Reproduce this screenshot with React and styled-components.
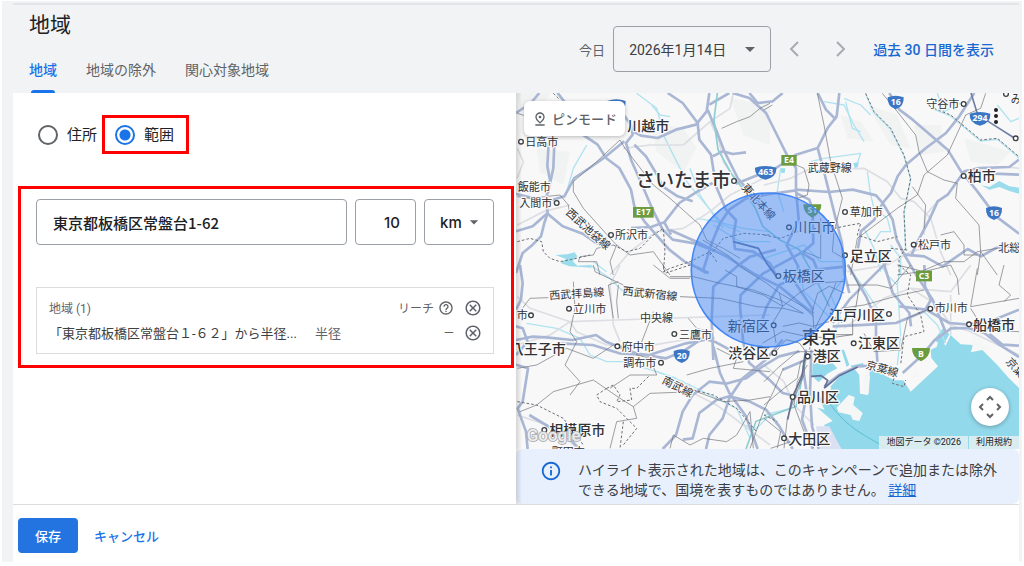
import { useState } from "react";
import styled, { createGlobalStyle } from "styled-components";
import {
  MdArrowDropDown,
  MdHelpOutline,
  MdInfoOutline,
  MdOutlineCancel,
  MdOutlinePinDrop,
} from "react-icons/md";

// main roads, in the coordinates of the whole map
const ROADS = [
  "M0 60L45 30 70 0",
  "M125 0L160 45 200 125 245 155 270 195 310 225 345 290 355 340 385 385 420 425 460 470 505 505 540 522 572 540",
  "M325 145L270 190 225 222 175 255 145 310 95 325 0 303",
  "M98 150L94 220 102 260 90 320 95 360 50 400 0 415",
  "M115 150L112 225 96 300",
  "M95 362L140 400 200 422 240 450 280 462",
  "M0 540L20 480 50 455 75 430 85 390 95 360",
  "M295 30L345 95 350 125 330 150 345 200 380 280 410 350 440 410 470 440 540 452 600 475",
  "M350 115L375 128 425 135 480 110 540 95 572 55 580 0",
  "M355 155L390 190 420 240 440 280 485 310 530 325",
  "M455 0L500 30 545 90 550 140 585 185 600 280 630 350 660 381 652 431 657 468 712 476 762 511 782 551",
  "M575 50L600 110 625 175 665 255 720 320 760 370",
  "M580 35L640 0",
  "M590 190L620 175 650 183 690 178",
  "M345 405L405 402 445 388 490 330 545 295 590 270",
  "M445 388L465 425",
  "M660 272L720 248 780 225 840 185 905 165",
  "M650 0L700 15 750 60 780 120 815 190 840 225 840 290 848 380 812 456 847 521 832 561 892 651",
  "M700 0L725 30 770 25 800 0",
  "M0 0",
  "M840 292L762 303 690 316 640 350 612 391 587 451 562 531",
  "M545 524L578 540",
  "M840 290L940 297 1010 290 1080 307 1100 330 1130 380 1142 440 1165 485 1200 545 1250 620 1290 720",
  "M970 0L962 70 935 105 905 165 925 240 950 340 965 400 978 450 985 540 1000 600",
  "M905 0L930 50 960 80",
  "M840 300L880 320 890 350 892 451 862 476 742 541 674 606 672 641 682 751",
  "M592 801L587 681 592 581 662 521 702 491 780 470",
  "M462 411L552 451 632 491 712 541 792 581 852 631 892 661",
  "M732 701L752 641 790 575 900 530 985 521",
  "M852 476L892 501 902 526",
  "M1375 0L1330 70 1290 120 1230 165 1170 215 1145 250 1125 300 1100 330 1075 380 1035 415 1025 470",
  "M1120 0L1150 50 1190 80 1260 140 1295 170 1335 235 1380 290 1440 370 1509 422",
  "M1509 200L1480 222 1390 225 1345 235 1295 305 1265 325 1240 380 1200 455 1185 490",
  "M1509 245L1435 242 1365 232",
  "M1165 485L1225 490 1280 520 1355 468 1395 490 1440 465 1509 455",
  "M995 515L1050 610 1080 680 1080 740 1085 820",
  "M1120 500L1060 560 1000 620 950 690",
  "M1100 500L1130 600 1180 660 1185 700",
  "M950 700L1060 695 1140 690 1225 655 1245 620 1227 580 1225 516",
  "M1160 840L1220 785 1255 742 1305 706 1355 705 1405 720 1450 755 1509 792",
  "M1509 650L1430 682 1360 695 1300 690 1230 650 1150 640",
  "M1420 722L1460 755 1509 758",
  "M925 880L970 845 1025 820 1080 818",
  "M870 770L862 830 872 900 858 980 890 1068",
  "M886 770L882 900 888 1000 908 1068",
  "M0 741L50 731 90 733 170 741 240 726 270 746 360 781 450 796 500 776 560 736 600 748 660 780",
  "M130 751L230 756 310 781 400 786 510 751 595 735",
  "M0 786L35 746 20 706 0 700",
  "M12 516L20 570 15 620 0 650",
  "M0 815L36 826 20 926 5 946 30 1016 35 1068",
  "M40 966L90 996 160 1036 190 1068",
  "M592 760L612 840 640 900 690 970 725 1068",
  "M440 1068L480 1026 500 956 530 906 580 866 630 872 690 856 740 820 790 790 850 775",
  "M570 1068L580 1026 620 976 640 916 680 856 750 800 800 740",
  "M640 910L700 925 750 950 790 1000 830 1068",
  "M500 1040L530 1036 550 960 600 922 640 910",
  "M682 751L700 810 760 860 800 900 860 915",
  "M800 830L870 800",
];

const CITY_RAILS = [
  "M462 551L532 551 612 571 712 591 792 621 862 661",
  "M492 611L612 616 722 641 802 646 862 661",
  "M627 531L662 551 662 581 742 606 800 640",
  "M560 441L642 491 672 521 752 571 792 601 862 641 892 671",
  "M985 600L940 580 905 600 890 650 895 730",
  "M960 570L930 640 900 700 880 770",
  "M800 640L850 600 900 570 985 565",
  "M780 750L770 690 800 640 790 600",
  "M800 700L850 690 890 700 960 680",
  "M740 750L800 715 870 730 940 735 1010 725",
  "M780 775L810 740 850 750 880 790",
  "M1010 660L1010 725 950 725",
  "M1000 520L1030 580 1020 640 975 690",
];

// sparser layers, in four sheets that each have their own origin
const SHEETS = [
  {
    id: "nw",
    x: -18,
    y: -24,
    fields: [
      "M420 110L520 130 560 190 520 260 440 200Z",
      "M22 25L120 25 90 90 30 70Z",
      "M660 40L780 60 780 180 700 150Z",
      "M80 190L180 200 160 300 90 260Z",
    ],
    minor: [
      "M22 190L40 230 22 280",
      "M340 190L420 180 520 180 600 110 660 70 670 25",
      "M300 570L360 500 440 440 520 430 600 380 660 330 740 290 780 270",
      "M600 110L625 160 640 230 680 290 740 340 780 400",
      "M22 420L100 380 180 360",
    ],
    water: [
      "M140 25L170 60 190 70",
      "M230 180L190 250 170 320",
      "M380 25L440 70 465 160 500 230 530 290 580 350 640 420 690 440",
      "M425 60L450 90 480 95",
      "M540 250L570 330 610 390 640 430",
      "M560 400L620 410 700 430 780 440",
      "M250 530L290 560",
      "M610 420L690 470 780 470",
    ],
    rails: [
      "M22 85L45 92",
      "M330 165L345 190 430 300 480 340 570 420 590 465",
      "M330 165L260 230 190 290 190 320 220 370 310 470 320 480",
      "M320 480L360 510 430 500 480 570",
      "M320 480L300 530 310 570",
      "M310 480L260 490 250 510 210 515 205 530 260 530 270 570",
      "M635 130L680 110 720 95 750 70 780 55",
      "M22 335L60 340 150 330 175 360 180 400",
      "M590 465L640 490 690 520",
    ],
    borders: [
      "M22 470L60 460 95 470 100 500 120 520 150 530 200 520 240 510",
      "M310 480L350 500 390 490 430 450 460 430 465 500 460 560 480 550 540 530 600 500 620 530",
      "M600 510L640 460 700 445 780 450",
      "M130 25L150 45",
    ],
  },
  {
    id: "ne",
    x: 744,
    y: -24,
    fields: [
      "M310 60L400 90 440 190 380 180Z",
      "M450 120L530 120 540 200 470 210Z",
      "M230 90L290 110 330 170 250 160Z",
      "M600 160L740 200 700 240 620 230Z",
    ],
    minor: [
      "M0 300L80 280 130 255 300 250 370 290 410 340 450 350 500 400 530 500 560 570",
      "M250 560L370 540 440 500 520 480",
      "M640 260L720 245 765 250",
      "M480 450L485 390 520 350",
    ],
    water: [
      "M180 50L240 60 270 120 300 170",
      "M245 50L265 130 290 140",
      "M320 90L290 60 240 40",
      "M310 260L320 330 330 370 370 400 380 440 350 440 330 470",
      "M140 230L180 220 290 205 280 235",
      "M520 25L540 80 600 50",
      "M700 60L740 110 765 100",
      "M300 430L330 490 350 560",
      "M50 250L40 320 60 380",
      "M380 480L410 520 410 570",
      "M305 28L330 83 380 133 420 213 440 283 420 383 425 493",
      "M510 73L560 93 620 143 650 168 700 163 765 218",
      "M0 520L60 500 120 480 170 530 240 530",
    ],
    rails: [
      "M25 60L0 75",
      "M160 25L180 120 200 230 235 340 210 440 205 500 240 520",
      "M85 235L120 250 135 300 130 330 100 340",
      "M355 25L400 80 455 150 465 200 490 260 540 285 580 295 575 340 645 420 650 500 700 570",
      "M665 25L650 70 605 90 550 210 480 270 460 330 400 370 280 460 260 570",
      "M445 305L485 360 480 430",
      "M530 450L570 440 600 480 600 510 640 510",
      "M700 490L640 500 600 530 540 530 470 560 400 570",
      "M650 500L640 570",
      "M170 400L170 520 120 500",
    ],
    borders: [
      "M305 25L330 80 380 130 420 210 440 280 420 380 425 490 405 520 405 570",
      "M510 70L560 90 620 140 650 165 700 160 765 215",
      "M210 430L260 420 290 415 280 450 340 470 400 455",
      "M380 490L430 495",
      "M0 450L50 460 100 440 160 430",
    ],
  },
  {
    id: "sw",
    x: -18,
    y: 516,
    fields: [],
    minor: [
      "M22 95L60 130 180 170 320 165 620 155 780 150",
      "M330 0L300 60 310 180 330 230",
      "M22 240L120 210 180 170 200 200 290 240 400 245 610 210",
      "M22 450L140 490 200 550",
      "M520 370L620 420 700 480 780 540",
    ],
    water: [
      "M50 175L140 190 210 220 240 270 290 290 340 290 440 320 500 340",
      "M440 320L520 350 560 380",
      "M240 0L300 40 340 80",
      "M700 480L740 490 780 450",
      "M530 355L600 390 680 430 720 520",
    ],
    rails: [
      "M22 150L60 100 115 98",
      "M190 50L195 130 180 200 200 230 165 300 210 350 180 390",
      "M250 0L255 20 340 60 345 90",
      "M325 50L295 60 310 160",
      "M325 60L320 110 325 160",
      "M22 310L80 300 170 250 250 280 310 240",
      "M30 440L80 420 130 380 250 345 330 400 370 425 420 385 500 382",
      "M430 140L380 270 420 280 440 330 360 330 300 370",
      "M535 160L560 190 600 200",
      "M370 425L380 460 320 470 300 550",
      "M480 550L490 510 540 540 580 520 650 530 680 510 720 440 730 550",
      "M530 330L600 310 700 290",
      "M620 250L680 280 670 310 780 320",
      "M430 0L480 40 540 40",
      "M560 380L640 410 720 405 780 395",
      "M720 550L760 440 790 380 820 310",
    ],
    borders: [
      "M22 410L80 420 160 460 220 540",
      "M290 370L260 390 270 410 320 430 380 490 340 540",
      "M290 370L310 360 330 390 320 410 365 405 360 370 380 370 400 350 420 330",
      "M340 470L330 550",
      "M460 0L465 25 540 0",
      "M550 375L610 390 680 430 740 500",
    ],
  },
  {
    id: "se",
    x: 744,
    y: 516,
    fields: [],
    minor: [
      "M240 190L360 100 440 70 520 120 560 180 620 200 765 270",
      "M0 300L60 350 90 420 150 480",
      "M440 70L560 80 620 0",
      "M560 90L560 210",
    ],
    water: [
      "M250 0L300 70 340 130 350 180",
      "M410 0L400 60 410 210 400 300",
      "M350 0L370 30 400 60",
      "M470 130L520 180 545 235",
      "M240 40L200 90 230 160 200 230",
      "M0 450L80 430 120 330",
      "M100 0L120 80 200 160",
    ],
    rails: [
      "M400 0L480 20 560 0 580 40 585 90",
      "M720 0L705 60 740 90 720 110",
      "M765 100L620 125 640 10",
      "M620 130L660 195 765 200",
      "M0 350L40 310 100 260 150 260",
      "M0 420L60 370 100 340 110 290 140 280",
      "M150 550L120 500 90 420 100 350 130 300",
      "M300 205L330 260 410 255 430 160 500 130",
      "M250 60L340 60 380 70 440 0",
      "M230 130L300 120 410 90 480 75",
      "M40 550L50 500 0 460",
      "M60 550L70 460 90 400 120 330 125 260",
      "M20 550L80 530",
    ],
    borders: [
      "M405 0L440 30 430 90 470 150 480 200 420 215 410 300",
      "M390 340L385 355 420 365 425 345",
      "M0 450L40 470",
    ],
  },
];

const BAY =
  "M1509 885L1479 856 1444 816 1399 771 1364 778 1372 756 1334 754 1304 726 1289 758 1270 734 1262 762 1244 770 1246 795 1266 820 1184 896 1162 862 1134 862 1062 824 1056 906 1032 902 1030 846 1014 826 979 841 939 886 914 892 948 920 906 912 926 950 904 944 950 984 924 996 976 1068 1509 1068Z";
const DOCKS =
  "M890 808L930 816 946 806 964 826 934 842 908 868 888 850ZM976 770L984 770 1000 815 992 822ZM1004 818L1040 810 1044 816 1008 824ZM1254 740L1282 704 1300 724 1280 760Z";
const ISLANDS = [
  "M998 906L1016 912 1012 936 1040 960 1030 984 1010 980 1004 966 968 958 962 944Z",
  "M1052 838L1040 862 1044 900 1058 902 1062 850Z",
  "M924 872L946 884 936 904 918 892Z",
  "M1366 718L1400 722 1396 756 1422 760 1420 770 1370 768Z",
  "M1186 840L1206 834 1210 850 1192 856Z",
];
const LAKES =
  "M118 486L154 484 176 478 184 490 170 504 184 518 226 516 228 524 196 522 160 520 134 510 150 498ZM1395 276L1420 282 1450 264 1480 280 1509 284 1509 302 1480 294 1450 282 1420 290ZM1012 210L1028 208 1026 222 1016 226ZM794 226L808 226 806 240 796 240Z";

const LABELS = [
  ["川越市", 334, 115, 42, 500],
  ["日高市", 28, 158, 33],
  ["飯能市", 5, 293, 33],
  ["入間市", 10, 343, 33],
  ["所沢市", 297, 437, 33],
  ["さいたま市", 360, 283, 57, 500],
  ["武蔵野線", 875, 238, 33],
  ["守谷市", 1231, 46, 33],
  ["み", 1484, 29, 33],
  ["柏市", 1355, 263, 42, 500],
  ["草加市", 1001, 369, 33],
  ["川口市", 832, 418, 42],
  ["松戸市", 1206, 467, 33],
  ["足立区", 1001, 503, 42, 500],
  ["北総", 1447, 476, 33],
  ["板橋区", 800, 565, 42],
  ["立川市", 172, 660, 33],
  ["市", 2, 679, 33],
  ["中央線", 372, 688, 33],
  ["新宿区", 635, 714, 42],
  ["三鷹市", 489, 737, 33],
  ["府中市", 317, 774, 33],
  ["八王子市", -19, 783, 42, 500],
  ["渋谷区", 637, 795, 42, 500],
  ["調布市", 322, 821, 33],
  ["相模原市", 100, 1027, 42, 500],
  ["町田市", 107, 1090, 33],
  ["江戸川区", 939, 680, 42, 500],
  ["東京", 857, 752, 54, 500],
  ["市川市", 1256, 658, 33],
  ["船橋市", 1371, 710, 42, 500],
  ["江東区", 1026, 766, 42, 500],
  ["港区", 890, 805, 42, 500],
  ["品川区", 843, 928, 42, 500],
  ["大田区", 817, 1052, 42, 500],
];

// text, centre x, centre y, angle
const LINE_NAMES = [
  ["西武池袋線", 217, 408, 42],
  ["東北本線", 728, 326, 48],
  ["西武拝島線", 182, 602, -4],
  ["西武新宿線", 402, 602, 6],
  ["南武線", 485, 881, 27],
  ["京葉線", 1099, 827, 15],
  ["京葉線", 1510, 836, 48],
];

const TOWNS = [
  [15, 146], [122, 330], [285, 426], [654, 264], [1343, 33], [1470, 3],
  [1343, 249], [987, 357], [819, 403], [1193, 455], [987, 487], [787, 549],
  [159, 647], [45, 667], [475, 723], [304, 760], [435, 809], [85, 1011],
  [773, 697], [775, 780], [1119, 663], [1243, 647], [1359, 694], [1013, 751],
  [875, 790], [830, 912], [804, 1036], [1499, 136],
];

const EXPRESSWAYS = [
  ["E17", 382, 358, 62],
  ["E4", 819, 202, 46],
  ["C3", 1224, 549, 48],
];

const ROUTES = [
  ["463", 749, 238, 64],
  ["16", 1139, 27, 48],
  ["294", 1392, 76, 62],
  ["16", 1434, 359, 48],
  ["20", 497, 788, 48],
  ["", 301, 38, 56],
];

const METRO_ROUTES = [
  ["S1", 889, 352],
  ["B", 1215, 783],
];

const GlobalStyle = createGlobalStyle`
  * {
    box-sizing: border-box;
  }
  body {
    margin: 0;
    background: #fff;
    color: #3c4043;
    font-family: Roboto, "Noto Sans CJK JP", sans-serif;
    font-size: 14px;
  }
  button,
  input,
  select {
    font-family: inherit;
    color: inherit;
    margin: 0;
  }
  button {
    border: 0;
    padding: 0;
    background: none;
    cursor: pointer;
  }
`;

const MapDrawing = () => (
  <MapSvg viewBox="0 0 1509 1068" preserveAspectRatio="xMidYMid slice">
    <rect width="1509" height="1068" fill="#f8f8f8" />
    {SHEETS.map((s) => (
      <g key={s.id} transform={`translate(${s.x} ${s.y})`}>
        {s.fields.map((d) => (
          <path key={d} d={d} fill="#f1f2f2" />
        ))}
      </g>
    ))}
    <path d={BAY} fill="#92d9eb" />
    <path d={DOCKS} fill="#92d9eb" />
    <path d="M900 1000L940 1000 976 1068 910 1068Z" fill="#dbe1f3" />
    {ISLANDS.map((d) => (
      <path key={d} d={d} fill="#f5f6f6" />
    ))}
    <path
      d="M940 930Q980 990 1050 1030T1110 1068"
      fill="none"
      stroke="#5cbfd2"
      strokeWidth="3"
    />
    <path d={LAKES} fill="#9adcec" />
    {SHEETS.map((s) => (
      <g
        key={s.id}
        transform={`translate(${s.x} ${s.y})`}
        fill="none"
        strokeLinejoin="round"
      >
        {s.water.map((d) => (
          <path key={d} d={d} stroke="#b0e3f0" strokeWidth="4" />
        ))}
        {s.minor.map((d) => (
          <path key={d} d={d} stroke="#dcdee3" strokeWidth="5" />
        ))}
      </g>
    ))}
    <g fill="none" stroke="#a9b7d5" strokeWidth="8" strokeLinejoin="round">
      {ROADS.map((d) => (
        <path key={d} d={d} />
      ))}
    </g>
    {/* national route 294 */}
    <path
      d="M1365 0L1385 65 1440 100 1495 135"
      fill="none"
      stroke="#6f7fa6"
      strokeWidth="5"
    />
    {/* trunk railway through the prefecture */}
    <path
      d="M604 0L594 80 606 170 645 240 690 300 720 350 740 400 790 440 850 470 900 560 940 640"
      fill="none"
      stroke="#8fcdd3"
      strokeWidth="5"
    />
    <path
      d="M870 780L850 900 840 940 720 985 690 1068"
      fill="none"
      stroke="#8fcdd3"
      strokeWidth="5"
    />
    <g fill="none" stroke="#5f6368" strokeWidth="2" strokeLinejoin="round">
      {CITY_RAILS.map((d) => (
        <path key={d} d={d} />
      ))}
    </g>
    {/* bullet train line and the waterfront expressway */}
    <g fill="none" stroke="#65719a" strokeWidth="5">
      <path d="M652 446L727 466 752 511 782 551" />
      <path d="M885 850L915 848 935 862 925 885 970 848 1025 822" />
      <path d="M868 780L858 850 830 910 815 980" />
    </g>
    {SHEETS.map((s) => (
      <g
        key={s.id}
        transform={`translate(${s.x} ${s.y})`}
        fill="none"
        stroke="#6d7075"
        strokeLinejoin="round"
      >
        {s.rails.map((d) => (
          <path key={d} d={d} strokeWidth="2" />
        ))}
        {s.borders.map((d) => (
          <path key={d} d={d} strokeWidth="3" strokeDasharray="8 6" />
        ))}
      </g>
    ))}
    <MapText>
      {LABELS.map(([name, x, y, size, weight = 400]) => (
        <text key={name + x} x={x} y={y} fontSize={size} fontWeight={weight}>
          {name}
        </text>
      ))}
      {LINE_NAMES.map(([name, x, y, angle]) => (
        <text
          key={name + x}
          transform={`translate(${x} ${y}) rotate(${angle})`}
          y="12"
          textAnchor="middle"
          fontSize="33"
        >
          {name}
        </text>
      ))}
    </MapText>
    {TOWNS.map(([x, y]) => (
      <circle
        key={`${x}-${y}`}
        cx={x}
        cy={y}
        r="7"
        fill="#fff"
        stroke="#3c4043"
        strokeWidth="4"
      />
    ))}
    <SignText>
      {EXPRESSWAYS.map(([name, x, y, w]) => (
        <g key={name} transform={`translate(${x} ${y})`}>
          <rect x={-w / 2} y="-16" width={w} height="32" fill="#6b9c3e" />
          <text y="9">{name}</text>
        </g>
      ))}
      {METRO_ROUTES.map(([name, x, y]) => (
        <g key={name} transform={`translate(${x} ${y})`}>
          <path d="M-27 -18H27Q28 8 0 22Q-28 8 -27 -18Z" fill="#6b9c3e" />
          <text y="8">{name}</text>
        </g>
      ))}
      {ROUTES.map(([name, x, y, w]) => (
        <g key={name + x} transform={`translate(${x} ${y})`}>
          <path
            d={`M${-w / 2} -14Q0 -24 ${w / 2} -14Q${w / 2 + 2} 14 0 22Q${-w / 2 - 2} 14 ${-w / 2} -14Z`}
            fill="#3b76c4"
          />
          <text y="9">{name}</text>
        </g>
      ))}
    </SignText>
    <circle
      cx="757"
      cy="531"
      r="231"
      fill="#4285f4"
      fillOpacity="0.5"
      stroke="#4285f4"
      strokeWidth="5"
    />
    <text
      x="32"
      y="1045"
      fontSize="51"
      fontWeight="500"
      fill="#fff"
      fillOpacity="0.8"
      stroke="#a6a9ad"
      strokeWidth="5"
      paintOrder="stroke"
    >
      Google
    </text>
  </MapSvg>
);

const RadioOption = ({ label, value, current, onChange }) => (
  <RadioLabel>
    <Radio
      type="radio"
      name="mode"
      value={value}
      checked={current === value}
      onChange={() => onChange(value)}
    />
    {label}
  </RadioLabel>
);

const App = () => {
  const [mode, setMode] = useState("radius");
  const [tab, setTab] = useState("地域");

  return (
    <Page>
      <GlobalStyle />
      <Shell>
        <Header>
          <div>
            <Title>地域</Title>
            <Tabs role="tablist">
              {["地域", "地域の除外", "関心対象地域"].map((name) => (
                <Tab
                  key={name}
                  role="tab"
                  aria-selected={tab === name}
                  $active={tab === name}
                  onClick={() => setTab(name)}
                >
                  {name}
                </Tab>
              ))}
            </Tabs>
          </div>
          <DateNav>
            <Today>今日</Today>
            <DateButton>
              2026年1月14日
              <MdArrowDropDown size={24} />
            </DateButton>
            <StepButton aria-label="前の期間">
              <svg width="24" height="24" viewBox="0 0 24 24">
                <path d="M15 5L8 12L15 19" />
              </svg>
            </StepButton>
            <StepButton aria-label="次の期間">
              <svg width="24" height="24" viewBox="0 0 24 24">
                <path d="M9 5L16 12L9 19" />
              </svg>
            </StepButton>
            <RangeLink href="#last30">過去 30 日間を表示</RangeLink>
          </DateNav>
        </Header>

        <Body>
          <Settings>
            <RadioRow>
              <RadioOption
                label="住所"
                value="address"
                current={mode}
                onChange={setMode}
              />
              <RadioMark>
                <RadioOption
                  label="範囲"
                  value="radius"
                  current={mode}
                  onChange={setMode}
                />
              </RadioMark>
            </RadioRow>

            <AreaMark>
              <Fields>
                <AddressInput
                  aria-label="住所"
                  defaultValue="東京都板橋区常盤台1-62"
                />
                <DistanceInput aria-label="半径" defaultValue="10" />
                <UnitBox>
                  <UnitSelect aria-label="単位" defaultValue="km">
                    <option value="km">km</option>
                    <option value="mi">mi</option>
                  </UnitSelect>
                  <MdArrowDropDown size={20} />
                </UnitBox>
              </Fields>
              <ListBox>
                <List>
                  <thead>
                    <tr>
                      <th>地域 (1)</th>
                      <ReachCell as="th">
                        <Reach>
                          リーチ
                          <MdHelpOutline size={16} />
                        </Reach>
                      </ReachCell>
                      <IconCell as="th">
                        <IconButton aria-label="すべて削除">
                          <MdOutlineCancel size={18} />
                        </IconButton>
                      </IconCell>
                    </tr>
                  </thead>
                  <tbody>
                    <tr>
                      <td>
                        <Place>
                          <span>「東京都板橋区常盤台１-６２」から半径...</span>
                          <Kind>半径</Kind>
                        </Place>
                      </td>
                      <ReachCell>—</ReachCell>
                      <IconCell>
                        <IconButton aria-label="削除">
                          <MdOutlineCancel size={18} />
                        </IconButton>
                      </IconCell>
                    </tr>
                  </tbody>
                </List>
              </ListBox>
            </AreaMark>
          </Settings>

          <MapColumn>
            <MapArea>
              <MapDrawing />
              <PinButton>
                <MdOutlinePinDrop size={16} />
                ピンモード
              </PinButton>
              <MenuButton aria-label="メニュー">
                <svg width="6" height="18" viewBox="0 0 6 18">
                  <circle cx="3" cy="3" r="2" />
                  <circle cx="3" cy="9" r="2" />
                  <circle cx="3" cy="15" r="2" />
                </svg>
              </MenuButton>
              <MoveButton aria-label="地図のカメラ コントロール">
                <svg width="24" height="24" viewBox="0 0 24 24">
                  <path d="M9 5L12 2L15 5M9 19L12 22L15 19M5 9L2 12L5 15M19 9L22 12L19 15" />
                </svg>
              </MoveButton>
              <Attribution>
                <span>地図データ ©2026</span>
                <a href="#terms">利用規約</a>
              </Attribution>
            </MapArea>
            <Notice>
              <MdInfoOutline size={22} />
              <p>
                ハイライト表示された地域は、このキャンペーンで追加または除外できる地域で、国境を表すものではありません。{" "}
                <a href="#details">詳細</a>
              </p>
            </Notice>
          </MapColumn>
        </Body>

        <Footer>
          <SaveButton>保存</SaveButton>
          <CancelButton>キャンセル</CancelButton>
        </Footer>
      </Shell>
    </Page>
  );
};

export default App;

const Page = styled.div`
  min-height: 100vh;
  padding: 1px 2px 4px;
  display: flex;
`;

const Shell = styled.div`
  flex: 1;
  display: flex;
  flex-direction: column;
  padding: 2px 3px 0 11px;
  background: #f1f3f4;
`;

const Header = styled.header`
  display: flex;
  justify-content: space-between;
  border-top: 2px solid #e2e4e7;
  padding: 0 25px 0 16px;
`;

const Title = styled.h1`
  margin: 0;
  font-size: 21px;
  line-height: 40px;
  font-weight: 400;
  color: #202124;
`;

const Tabs = styled.div`
  display: flex;
  gap: 29px;
`;

const Tab = styled.button`
  height: 48px;
  display: flex;
  flex-direction: column;
  align-items: center;
  justify-content: space-between;
  padding-top: 14px;
  font-size: 14px;
  line-height: 22px;
  font-weight: ${(props) => (props.$active ? 500 : 400)};
  color: ${(props) => (props.$active ? "#1a73e8" : "#5f6368")};

  &::after {
    content: "";
    width: 24px;
    height: 3px;
    border-radius: 3px 3px 0 0;
    background: ${(props) => (props.$active ? "#1a73e8" : "transparent")};
  }
`;

const DateNav = styled.div`
  display: flex;
  align-items: center;
`;

const Today = styled.span`
  margin-right: 8px;
  font-size: 13px;
  color: #5f6368;
`;

const DateButton = styled.button`
  width: 158px;
  height: 46px;
  margin-right: 12px;
  padding: 0 8px 0 15px;
  display: flex;
  align-items: center;
  justify-content: space-between;
  border: 1px solid #9aa0a6;
  border-radius: 4px;
  font-size: 14px;

  svg {
    fill: #5f6368;
  }
`;

const StepButton = styled.button`
  display: flex;
  margin-right: 21px;

  path {
    fill: none;
    stroke: #a8abaf;
    stroke-width: 2;
  }
`;

const RangeLink = styled.a`
  font-size: 14px;
  font-weight: 500;
  color: #1967d2;
  text-decoration: none;
`;

const Body = styled.main`
  flex: 1;
  display: grid;
  grid-template-columns: minmax(0, 1fr) minmax(0, 1fr);
  background: #fff;
`;

const Settings = styled.section`
  padding: 22px 2px 0 5px;
`;

const RadioRow = styled.div`
  display: flex;
  align-items: center;
  gap: 5px;
  padding-left: 20px;
`;

const RadioLabel = styled.label`
  display: flex;
  align-items: center;
  gap: 9px;
  font-size: 15px;
  line-height: 20px;
  color: #202124;
`;

const Radio = styled.input`
  appearance: none;
  width: 20px;
  height: 20px;
  margin: 0;
  border: 2px solid #5f6368;
  border-radius: 50%;

  &:checked {
    border-color: #1a73e8;
    background: radial-gradient(circle, #1a73e8 5px, transparent 6px);
  }
`;

const RadioMark = styled.div`
  padding: 7px 12px 7px 10px;
  border: 3px solid #f00;

  label {
    height: 19px;
  }
`;

const AreaMark = styled.div`
  margin-top: 32px;
  padding: 10px 17px 11px 15px;
  border: 3px solid #f00;
`;

const Fields = styled.div`
  display: flex;
  gap: 8px;
`;

const AddressInput = styled.input`
  flex: 1;
  min-width: 0;
  height: 46px;
  padding: 0 16px;
  border: 1px solid #9aa0a6;
  border-radius: 4px;
  background: #fff;
  color: #202124;
  font-family: "Noto Sans CJK JP", sans-serif;
  font-size: 15px;
  font-weight: 500;
`;

const DistanceInput = styled(AddressInput)`
  flex: 0 0 61px;
  padding: 0 15px;
  text-align: right;
  font-family: Inter, sans-serif;
`;

const UnitBox = styled.div`
  width: 70px;
  height: 46px;
  display: flex;
  align-items: center;
  padding: 0 9px 0 15px;
  border: 1px solid #9aa0a6;
  border-radius: 4px;

  svg {
    flex: none;
    fill: #5f6368;
  }
`;

const UnitSelect = styled.select`
  appearance: none;
  flex: 1;
  min-width: 0;
  padding: 0;
  border: 0;
  background: none;
  color: #202124;
  font-family: Inter, sans-serif;
  font-size: 15px;
  font-weight: 500;
`;

const ListBox = styled.div`
  margin-top: 42px;
  padding: 7px 11px 8px 12px;
  border: 1px solid #dadce0;
`;

const List = styled.table`
  width: 100%;
  border-collapse: collapse;
  color: #5f6368;
  font-size: 13px;

  th,
  td {
    height: 25px;
    padding: 0;
    text-align: left;
    font-weight: 400;
    white-space: nowrap;
  }
  th {
    font-size: 12px;
  }
`;

const ReachCell = styled.td`
  && {
    text-align: right;
  }
`;

const Reach = styled.span`
  display: inline-flex;
  align-items: center;
  gap: 4px;
`;

const IconCell = styled.td`
  width: 28px;
`;

const IconButton = styled.button`
  display: flex;
  margin-left: auto;
  color: #5f6368;
`;

const Place = styled.div`
  display: flex;
  gap: 18px;
  color: #3c4043;
`;

const Kind = styled.span`
  color: #5f6368;
`;

const MapColumn = styled.section`
  display: flex;
  flex-direction: column;
  position: relative;

  /* shade cast by the panel on the left */
  &::after {
    content: "";
    position: absolute;
    inset: 0 auto 0 0;
    width: 6px;
    background: linear-gradient(to right, rgba(0, 0, 0, 0.14), transparent);
    pointer-events: none;
  }
`;

const MapArea = styled.div`
  flex: 1;
  min-height: 300px;
  position: relative;
  overflow: hidden;
`;

const MapSvg = styled.svg`
  position: absolute;
  inset: 0;
  width: 100%;
  height: 100%;
  display: block;
`;

const MapText = styled.g`
  font-family: "Noto Sans CJK JP", sans-serif;
  fill: #303236;
  stroke: #fbfbfb;
  stroke-width: 7px;
  stroke-linejoin: round;
  paint-order: stroke;
`;

const SignText = styled.g`
  text {
    font-family: "Open Sans", sans-serif;
    font-size: 26px;
    font-weight: 700;
    fill: #fff;
    text-anchor: middle;
  }
`;

const PinButton = styled.button`
  position: absolute;
  top: 8px;
  left: 8px;
  height: 35px;
  padding: 0 8px;
  display: flex;
  align-items: center;
  gap: 4px;
  border-radius: 6px;
  background: #fff;
  box-shadow: 0 1px 4px rgba(60, 64, 67, 0.35);
  color: #5f6368;
  font-size: 13px;
  font-weight: 500;
`;

const MenuButton = styled.button`
  position: absolute;
  top: 14px;
  right: 20px;
  display: flex;
  fill: #202124;
`;

const MoveButton = styled.button`
  position: absolute;
  right: 10px;
  bottom: 23px;
  width: 38px;
  height: 38px;
  display: flex;
  align-items: center;
  justify-content: center;
  border-radius: 50%;
  background: #fff;
  box-shadow: 0 1px 4px rgba(0, 0, 0, 0.3);

  path {
    fill: none;
    stroke: #5f6368;
    stroke-width: 2;
  }
`;

const Attribution = styled.div`
  position: absolute;
  right: 0;
  bottom: 0;
  display: flex;
  gap: 1px;
  font-size: 9px;
  line-height: 13px;
  color: #202124;

  span,
  a {
    padding: 0 7px;
    background: rgba(240, 243, 243, 0.75);
    color: inherit;
    text-decoration: none;
  }
`;

const Notice = styled.div`
  display: flex;
  align-items: flex-start;
  gap: 16px;
  padding: 11px 16px 4px 24px;
  border-radius: 6px;
  background: #e8f0fe;

  svg {
    flex: none;
    fill: #1967d2;
  }
  p {
    margin: 0;
    font-size: 14px;
    line-height: 20px;
  }
  a {
    color: #1967d2;
  }
`;

const Footer = styled.footer`
  display: flex;
  align-items: center;
  gap: 16px;
  padding: 13px 5px 9px;
  border-top: 1px solid #dadce0;
  background: #fff;
`;

const SaveButton = styled.button`
  height: 35px;
  padding: 0 17px;
  border-radius: 4px;
  background: #2374e1;
  color: #fff;
  font-size: 13px;
  font-weight: 500;
`;

const CancelButton = styled.button`
  color: #1a73e8;
  font-size: 13px;
  font-weight: 500;
`;
